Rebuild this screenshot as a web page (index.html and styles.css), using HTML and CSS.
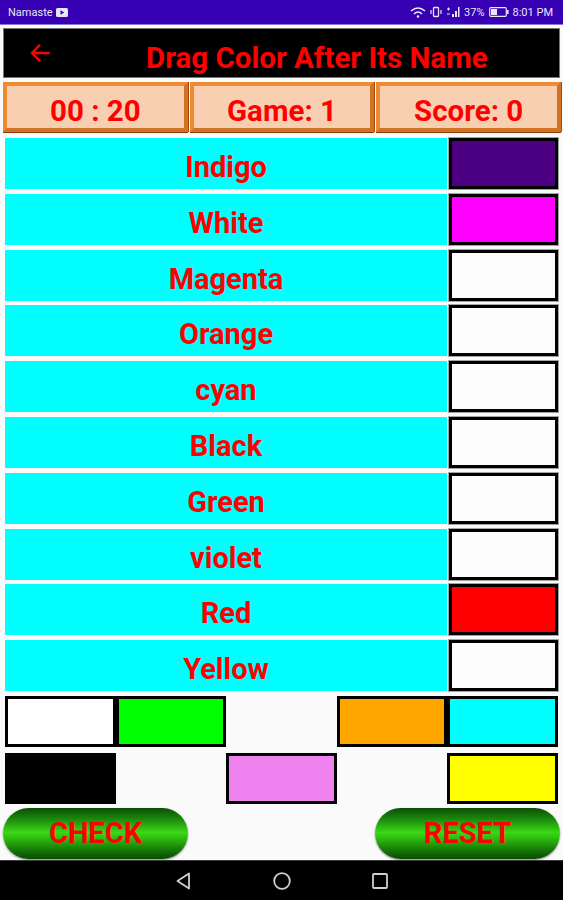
FILE: index.html
```html
<!DOCTYPE html>
<html lang="en">
<head>
<meta charset="utf-8">
<title>Drag Color After Its Name</title>
<link rel="stylesheet" href="styles.css">
</head>
<body>
<div class="screen">
  <header class="status">
    <div class="status-left">
      <span>Namaste</span>
      <svg class="notif" viewBox="0 0 12 9" width="12" height="9"><rect x="0" y="0" width="12" height="9" rx="1.5" fill="#e6e6f5"/><path d="M4.5 2.2 L8.2 4.5 L4.5 6.8 Z" fill="#3700b3"/></svg>
    </div>
    <div class="status-right">
      <svg viewBox="0 0 16 12" width="16" height="12"><path d="M1 5 Q8 -1 15 5" fill="none" stroke="#e6e6f5" stroke-width="1.6"/><path d="M4 8 Q8 4 12 8" fill="none" stroke="#e6e6f5" stroke-width="1.6"/><circle cx="8" cy="10.5" r="1.3" fill="#e6e6f5"/></svg>
      <svg viewBox="0 0 12 12" width="12" height="12"><rect x="3.5" y="1.5" width="5" height="9" rx="0.8" fill="none" stroke="#e6e6f5" stroke-width="1.3"/><path d="M1 4 V8 M11 4 V8" stroke="#e6e6f5" stroke-width="1.2"/></svg>
      <svg viewBox="0 0 14 12" width="14" height="12"><path d="M1 3 H4 M2.5 1.5 V4.5 M1 8 H4" stroke="#e6e6f5" stroke-width="1.1"/><path d="M6 11 H8 V8 H6 Z M9 11 H11 V5 H9 Z M12 11 H13.5 V1 H12 Z" fill="#e6e6f5"/></svg>
      <span>37%</span>
      <svg viewBox="0 0 20 10" width="20" height="10"><rect x="0.7" y="0.7" width="16.6" height="8.6" rx="1" fill="none" stroke="#e6e6f5" stroke-width="1.2"/><rect x="2" y="2" width="6" height="6" fill="#e6e6f5"/><rect x="17.8" y="3" width="1.8" height="4" fill="#e6e6f5"/></svg>
      <span>8:01 PM</span>
    </div>
  </header>

  <div class="toolbar">
    <svg class="back" viewBox="0 0 24 24" width="26" height="26"><path d="M20 12 H5 M11.5 5 L4.5 12 L11.5 19" fill="none" stroke="#ff0000" stroke-width="2.2" stroke-linecap="round" stroke-linejoin="round"/></svg>
    <h1 class="title">Drag Color After Its Name</h1>
  </div>

  <section class="stats">
    <div class="stat">00 : 20</div>
    <div class="stat">Game: 1</div>
    <div class="stat">Score: 0</div>
  </section>

  <section class="rows">
    <div class="row"><div class="label">Indigo</div><div class="slot" style="background:#4b0082"></div></div>
    <div class="row"><div class="label">White</div><div class="slot" style="background:#ff00ff"></div></div>
    <div class="row"><div class="label">Magenta</div><div class="slot"></div></div>
    <div class="row"><div class="label">Orange</div><div class="slot"></div></div>
    <div class="row"><div class="label">cyan</div><div class="slot"></div></div>
    <div class="row"><div class="label">Black</div><div class="slot"></div></div>
    <div class="row"><div class="label">Green</div><div class="slot"></div></div>
    <div class="row"><div class="label">violet</div><div class="slot"></div></div>
    <div class="row"><div class="label">Red</div><div class="slot" style="background:#ff0000"></div></div>
    <div class="row"><div class="label">Yellow</div><div class="slot"></div></div>
  </section>

  <section class="tray">
    <div class="chip" style="background:#ffffff"></div>
    <div class="chip" style="background:#00ff00"></div>
    <div class="chip empty"></div>
    <div class="chip" style="background:#ffa500"></div>
    <div class="chip" style="background:#00ffff"></div>
    <div class="chip" style="background:#000000"></div>
    <div class="chip empty"></div>
    <div class="chip" style="background:#ee82ee"></div>
    <div class="chip empty"></div>
    <div class="chip" style="background:#ffff00"></div>
  </section>

  <section class="actions">
    <button class="pill">CHECK</button>
    <button class="pill">RESET</button>
  </section>

  <nav class="navbar">
    <svg viewBox="0 0 20 20" width="20" height="20"><path d="M15 2.5 L15 17.5 L3.5 10 Z" fill="none" stroke="#cfcfcf" stroke-width="1.8" stroke-linejoin="round"/></svg>
    <svg viewBox="0 0 20 20" width="20" height="20"><circle cx="10" cy="10" r="7.8" fill="none" stroke="#cfcfcf" stroke-width="1.8"/></svg>
    <svg viewBox="0 0 20 20" width="20" height="20"><rect x="3" y="3" width="14" height="14" rx="1" fill="none" stroke="#cfcfcf" stroke-width="1.8"/></svg>
  </nav>
</div>
</body>
</html>
```

FILE: styles.css
```css
* { box-sizing: border-box; }

html, body {
  margin: 0;
  padding: 0;
  background: #fafafa;
}

.screen {
  width: 563px;
  height: 900px;
  display: flex;
  flex-direction: column;
  font-family: Roboto, "Liberation Sans", sans-serif;
  overflow: hidden;
}

/* system status bar */
.status {
  height: 25px;
  background: #3700b3;
  border-bottom: 1px solid #8a78d8;
  color: #e6e6f5;
  font-size: 11px;
  display: flex;
  align-items: center;
  justify-content: space-between;
  padding: 0 10px 0 8px;
}
.status-left, .status-right {
  display: flex;
  align-items: center;
  gap: 3px;
}
.status-right { gap: 4px; }

/* app bar */
.toolbar {
  margin: 3px 3px 0 3px;
  height: 50px;
  background: #000;
  border: 1px solid #777;
  display: flex;
  align-items: center;
}
.back {
  margin-left: 23px;
  flex: none;
}
.title {
  margin: 0 0 0 93px;
  height: 48px;
  padding-top: 5px;
  line-height: 48px;
  overflow: hidden;
  color: #ff0000;
  font-size: 29.5px;
  font-weight: 700;
  white-space: nowrap;
}

/* timer / game / score */
.stats {
  margin: 4px 2px 0 3px;
  height: 50px;
  display: grid;
  grid-template-columns: repeat(3, 1fr);
  gap: 2px;
}
.stat {
  background: #f8cfb1;
  border: 4px solid #ee8a32;
  border-bottom-color: #d27224;
  border-right-color: #d27224;
  box-shadow: 0 1px 0 #8a3c0c, 1px 0 0 #a04a14;
  color: #ff0000;
  font-size: 29.5px;
  font-weight: 700;
  text-align: center;
  line-height: 40px;
  padding-top: 5px;
  overflow: hidden;
}

/* name rows with drop slots */
.rows {
  margin: 6px 5px 0 5px;
  display: flex;
  flex-direction: column;
  gap: 4.8px;
}
.row {
  height: 51px;
  display: grid;
  grid-template-columns: 442px 1fr;
  gap: 2px;
}
.label {
  background: #00ffff;
  color: #ff0000;
  font-size: 29px;
  font-weight: 700;
  text-align: center;
  line-height: 51px;
  padding-top: 4px;
  overflow: hidden;
}
.slot {
  background: #fdfdfd;
  border: 3px solid #000;
  box-shadow: 0 0 0 1px rgba(0, 0, 0, 0.35);
}

/* draggable colour chips */
.tray {
  margin: 5px 5px 0 5px;
  display: grid;
  grid-template-columns: repeat(5, 1fr);
  grid-auto-rows: 51px;
  row-gap: 5.5px;
}
.chip {
  border: 3.5px solid #000;
}
.chip.empty {
  border: none;
  background: transparent;
}

/* check / reset */
.actions {
  margin: 4px 3px 0 3px;
  display: flex;
  justify-content: space-between;
}
.pill {
  width: 185px;
  height: 51px;
  border: none;
  border-radius: 26px;
  background: linear-gradient(to bottom, #0b4f05 0%, #1b8a0c 22%, #3ad816 48%, #2fc012 58%, #167a08 82%, #0a4a04 100%);
  box-shadow: 0 1px 2px rgba(0, 0, 0, 0.45);
  color: #ff0000;
  font-family: Roboto, "Liberation Sans", sans-serif;
  font-size: 29px;
  font-weight: 700;
  padding: 0;
}

/* system navigation bar */
.navbar {
  margin-top: auto;
  height: 40px;
  background: #000;
  border-top: 1px solid #3a3a3a;
  display: flex;
  justify-content: center;
  align-items: center;
  gap: 78px;
}
```
